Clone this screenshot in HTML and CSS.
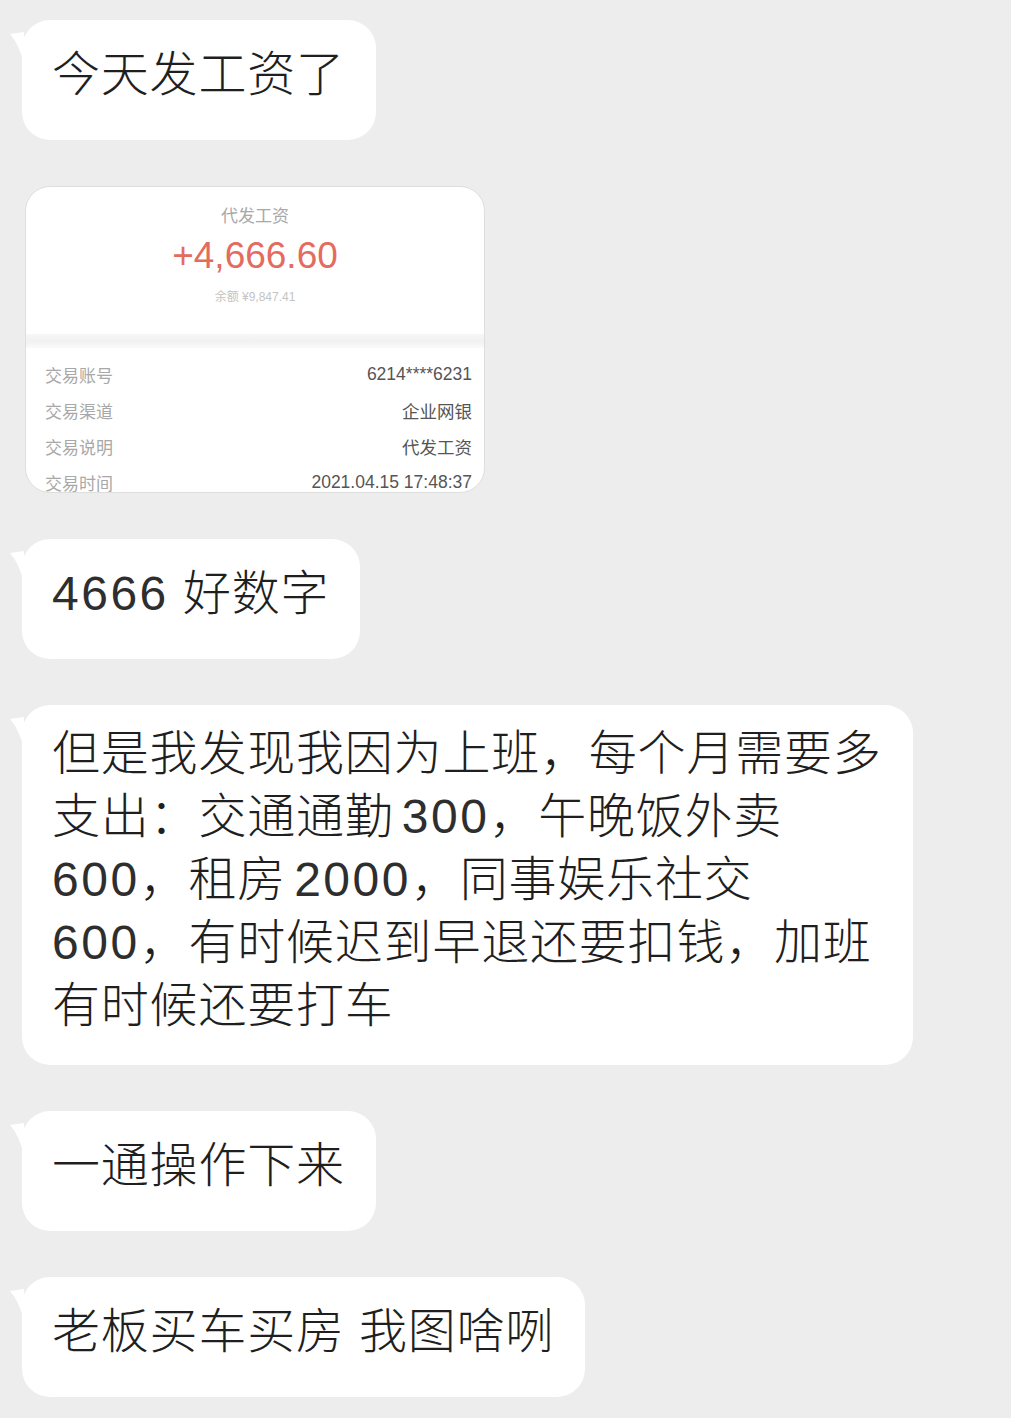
FILE: index.html
```html
<!DOCTYPE html>
<html>

<head>
    <title>聊天记录</title>
    <link rel="stylesheet" href="styles.css">
</head>

<body>

    <div class="chat">
        <div class="msg">
            <div class="bubble">今天发工资了</div>
        </div>

        <div class="msg">
            <div class="card">
                <div class="card-top">
                    <div class="card-title">代发工资</div>
                    <div class="card-amount">+4,666.60</div>
                    <div class="card-balance">余额 ¥9,847.41</div>
                </div>
                <div class="card-band"></div>
                <div class="card-rows">
                    <div class="row"><span class="row-label">交易账号</span><span class="row-value">6214****6231</span></div>
                    <div class="row"><span class="row-label">交易渠道</span><span class="row-value">企业网银</span></div>
                    <div class="row"><span class="row-label">交易说明</span><span class="row-value">代发工资</span></div>
                    <div class="row"><span class="row-label">交易时间</span><span class="row-value">2021.04.15 17:48:37</span></div>
                </div>
            </div>
        </div>

        <div class="msg">
            <div class="bubble"><span class="num">4666</span> 好数字</div>
        </div>

        <div class="msg">
            <div class="bubble bubble-long">但是我发现我因为上班，每个月需要多<br>支出：交通通勤 <span class="num">300</span>，午晚饭外卖<br><span class="num">600</span>，租房 <span class="num">2000</span>，同事娱乐社交<br><span class="num">600</span>，有时候迟到早退还要扣钱，加班<br>有时候还要打车</div>
        </div>

        <div class="msg">
            <div class="bubble">一通操作下来</div>
        </div>

        <div class="msg">
            <div class="bubble">老板买车买房 我图啥咧</div>
        </div>
    </div>

</body>

</html>
```

FILE: styles.css
```css
body {
    margin: 0;
    background: #ededed;
    font-family: 'Liberation Sans', 'Noto Sans CJK SC', sans-serif;
    color: #1f1f1f;
}

.chat {
    display: flex;
    flex-direction: column;
    align-items: flex-start;
    gap: 46px;
    padding: 20px 0 0 22px;
}

.msg {
    display: flex;
}

.bubble {
    position: relative;
    background: #ffffff;
    border-radius: 28px;
    padding: 24px 31px 34px 30px;
    font-size: 48px;
    font-weight: 300;
    letter-spacing: 0.8px;
    line-height: 62px;
    white-space: nowrap;
}

/* little tail at the top left of every bubble */
.bubble::before {
    content: "";
    position: absolute;
    left: -12px;
    top: 12px;
    width: 14px;
    height: 32px;
    background: #ffffff;
    clip-path: path("M0 2 L14 0 L14 32 Q9 12 0 2 Z");
}

.bubble-long {
    line-height: 63px;
    padding-top: 17px;
    padding-bottom: 28px;
    word-spacing: -6px;
}

.num {
    letter-spacing: 2.5px;
    color: #2e2e2e;
}

.card {
    margin-left: 3px;
    width: 458px;
    height: 305px;
    overflow: hidden;
    background: #ffffff;
    border: 1px solid #dedede;
    border-radius: 25px;
}

.card-top {
    display: flex;
    flex-direction: column;
    align-items: center;
    padding-top: 16px;
    height: 131px;
}

.card-title {
    font-family: 'Noto Sans CJK SC', sans-serif;
    font-size: 17px;
    line-height: 24px;
    color: #a8a8a8;
}

.card-amount {
    margin-top: 7px;
    font-size: 37px;
    line-height: 44px;
    color: #e36b5f;
}

.card-balance {
    margin-top: 11px;
    font-size: 12px;
    line-height: 16px;
    color: #c4c4c4;
}

.card-band {
    height: 14px;
    background: linear-gradient(#f7f7f7, #f1f1f1 50%, #fafafa);
}

.card-rows {
    padding: 8px 12px 0 19px;
}

.row {
    display: flex;
    justify-content: space-between;
    align-items: center;
    height: 36px;
}

.row-label {
    font-family: 'Noto Sans CJK SC', sans-serif;
    font-size: 17px;
    color: #a8a8a8;
}

.row-value {
    font-size: 17.5px;
    color: #555555;
}
```
